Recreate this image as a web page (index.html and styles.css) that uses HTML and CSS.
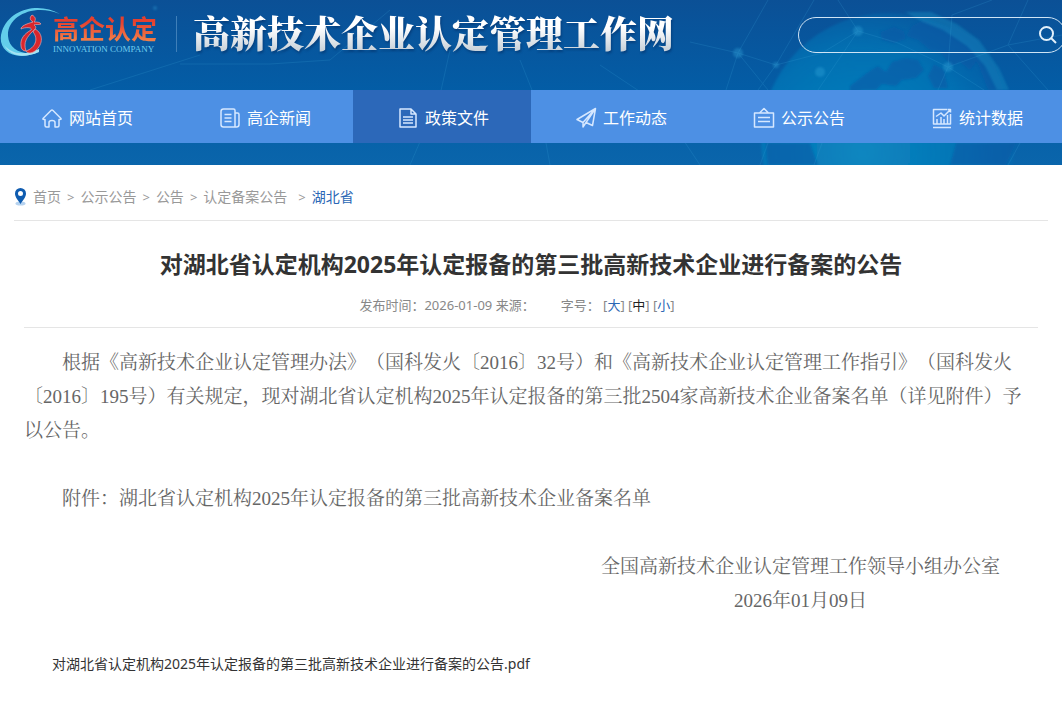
FILE: index.html
```
<!DOCTYPE html>
<html lang="zh-CN">
<head>
<meta charset="utf-8">
<title>高新技术企业认定管理工作网</title>
<link rel="stylesheet" href="styles.css">
</head>
<body>
<header class="header">
  <!-- globe and network lines -->
  <svg class="header-bg" viewBox="0 0 1062 165" preserveAspectRatio="xMaxYMin slice" aria-hidden="true">
    <defs>
      <radialGradient id="globe" cx="40%" cy="55%" r="60%">
        <stop offset="0" stop-color="#0a8dc4" stop-opacity=".85"/>
        <stop offset=".7" stop-color="#087fbd" stop-opacity=".6"/>
        <stop offset="1" stop-color="#0874b8" stop-opacity=".2"/>
      </radialGradient>
      <filter id="soft"><feGaussianBlur stdDeviation="1.2"/></filter>
    </defs>
    <circle cx="888" cy="140" r="127" fill="url(#globe)" filter="url(#soft)"/>
    <g fill="#0a58a5" opacity=".55" filter="url(#soft)">
      <path d="M880 32l14-5 10 4 2 8-12 4-12-3zM912 26l12-6 22 6 20 14 10 22-6 8-10-8-8 4-12-14-10-2-12-10-12-4z"/>
      <path d="M868 72l10-6 8 6 6-10 14-4 12 2 6 10-8 8-14 2-6 6-14-2-6 6h-14l-12 6v-10zM934 64l10 6 4 18h-14l-6-12z"/>
      <path d="M952 24l24 16 18 24 10 26h-16l-10-26-16-20-12-12z"/>
      <path d="M776 143h34q4 12 8 22h-50q-2-10-2-22zM956 143h60l-10 22h-56z"/>
    </g>
    <path d="M905 12h26l26 12 22 16 20 28 10 22h-12l-12-24-18-20-24-16-20-8z" fill="#1592c4" opacity=".4" filter="url(#soft)"/>
    <g stroke="#3aa3d8" stroke-width="1" fill="none" opacity=".2">
      <path d="M690 42l48 11 38 12 46-12 36-22 40 12 50 24 60-22 54-10M738 53l-12 37M738 53l30 37M738 53l30-53M776 65l-18 25M858 31l-20-31M858 31l-40 59M948 67l-10 23M948 67l36 23M948 67l4-52 40-15M1008 45l20-45M1008 45l40 45M814 0l-38 65"/>
      <path d="M180 64h90l60-4M450 50l-10 45-30 70M520 60l20 50 10 55M600 65l60 40 40 60M200 55L90 90M330 60l60-50M768 143l-8 22M822 143l-8 22M1020 143l-12 22"/>
    </g>
    <g fill="#35a8dc" opacity=".35" filter="url(#soft)">
      <circle cx="738" cy="53" r="5"/><circle cx="776" cy="65" r="3"/><circle cx="858" cy="31" r="5"/>
      <circle cx="820" cy="72" r="5"/><circle cx="948" cy="67" r="5"/><circle cx="155" cy="8" r="2"/>
    </g>
  </svg>

  <div class="top">
    <a class="logo" href="#" aria-label="高企认定">
      <svg class="logo-mark" width="62" height="54" viewBox="0 0 62 54" aria-hidden="true">
        <path d="M60 8C40-4 10 2 2 25c-6 18 10 32 37 21-16 4-30-2-31-16C7 10 34-3 60 8z" fill="#62cdea"/>
        <path d="M39 46c-16 7-29 4-35-7 8 9 19 11 35 4z" fill="#a4e3f4"/>
        <path d="M32 9c-3 3-2 5 1 7-7 2-12 4-12 7 4-2 12-2 10 1-7 4-11 9-10 16 0 3 2 5 5 5-3-9 1-14 7-20 4-3 3-5 1-6 2-1 4 0 7-1-1-2-4-2-7-2 2-2 2-5-2-7z" fill="#d9262c" stroke="#e9a5ab" stroke-width=".7"/>
        <path d="M35 23c8 4 9 15 0 22-4 3-8 2-9 0 9-3 13-12 7-19z" fill="#d9262c" stroke="#e9a5ab" stroke-width=".7"/>
      </svg>
      <span class="logo-text">
        <b>高企认定</b>
        <small>INNOVATION COMPANY</small>
      </span>
    </a>
    <div class="site-name">高新技术企业认定管理工作网</div>
    <form class="search">
      <input type="text" aria-label="搜索">
      <button type="button" aria-label="搜索">
        <svg width="20" height="20" viewBox="0 0 20 20"><circle cx="8.5" cy="8.5" r="6.5"/><path d="M13 13l5 5"/></svg>
      </button>
    </form>
  </div>

  <nav class="nav">
    <a href="#">
      <svg width="22" height="22" viewBox="0 0 22 22"><path d="M2 11.5L10 3.5q1-1 2 0l8 8q.5 1-1 1h-1v6q0 1.500-1.500 1.500H14v-4.500q0-2-3-2t-3 2V20H5.500Q4 20 4 18.500v-6H3q-1.500 0-1-1z"/></svg>
      网站首页</a>
    <a href="#">
      <svg width="22" height="22" viewBox="0 0 22 22"><path d="M4.500 2h10q1.500 0 1.500 1.500V20H4.500Q2 20 2 17.500v-13Q2 2 4.500 2zM16 6h2.500Q20 6 20 7.500v10q0 2.500-2.500 2.500H15M5.500 7.500h7M5.500 11h7M5.500 14.500h7"/></svg>
      高企新闻</a>
    <a class="on" href="#">
      <svg width="22" height="22" viewBox="0 0 22 22"><path d="M3 2h11l5 5v13H3zM14 2v5h5M6 10h10M6 13h10M6 16h10"/></svg>
      政策文件</a>
    <a href="#">
      <svg width="22" height="22" viewBox="0 0 22 22"><path d="M20.500 1.500L2 12.500l6 3 12.500-14-3 17-6.500-3-3 4.500v-4.500M20.500 1.500L11 15.500"/></svg>
      工作动态</a>
    <a href="#">
      <svg width="22" height="22" viewBox="0 0 22 22"><path d="M1.500 6h19v14h-19zM6.500 6L11 1.500 15.500 6M5 10.500h12M5 14.500h12"/></svg>
      公示公告</a>
    <a href="#">
      <svg width="22" height="22" viewBox="0 0 22 22"><path d="M16 2.500H2.500v14.500h17V7M2 20.500h18M6 17v-5M10 17v-7M13 17v-5M16.500 17V8M5 9.500l5-3.500 3 3 6.500-6.500M16.500 2.500h3v3"/></svg>
      统计数据</a>
  </nav>
</header>

<div class="main">
  <div class="crumb">
    <svg width="13" height="18" viewBox="0 0 13 18" aria-hidden="true">
      <ellipse cx="6.5" cy="15.5" rx="5" ry="2" fill="#b5d2ef"/>
      <path fill-rule="evenodd" d="M6.500 0A5.500 5.500 0 0 0 1 5.500c0 4 3.500 7 5.500 10.500 2-3.500 5.500-6.500 5.500-10.500A5.500 5.500 0 0 0 6.500 0zm0 3a2.500 2.500 0 1 1 0 5 2.500 2.500 0 0 1 0-5z" fill="#0f5cb0"/>
    </svg>
    <a href="#">首页</a><i>&gt;</i><a href="#">公示公告</a><i>&gt;</i><a href="#">公告</a><i>&gt;</i><a href="#">认定备案公告</a><i class="last">&gt;</i><a class="cur" href="#">湖北省</a>
  </div>

  <div class="article">
    <h1>对湖北省认定机构2025年认定报备的第三批高新技术企业进行备案的公告</h1>
    <div class="meta">
      <span>发布时间：<time>2026-01-09</time> 来源：</span>
      <span>字号： [<a href="#">大</a>] [<a class="mid" href="#">中</a>] [<a href="#">小</a>]</span>
    </div>
    <div class="content">
      <p>根据《高新技术企业认定管理办法》（国科发火〔2016〕32号）和《高新技术企业认定管理工作指引》（国科发火〔2016〕195号）有关规定，现对湖北省认定机构2025年认定报备的第三批2504家高新技术企业备案名单（详见附件）予以公告。</p>
      <p>附件：湖北省认定机构2025年认定报备的第三批高新技术企业备案名单</p>
      <div class="sign">全国高新技术企业认定管理工作领导小组办公室<br>2026年01月09日</div>
    </div>
    <a class="file" href="#">对湖北省认定机构2025年认定报备的第三批高新技术企业进行备案的公告.pdf</a>
  </div>
</div>
</body>
</html>
```
FILE: styles.css
```
* {box-sizing: border-box;}
body {margin: 0; background: #fff; color: #666; text-spacing-trim: space-all;
  font-family: "Noto Sans", "Noto Sans CJK SC", sans-serif; font-size: 14px;}
a {color: inherit; text-decoration: none;}

/* header */
.header {position: relative; overflow: hidden; padding-bottom: 22px;
  background: linear-gradient(#0b5096, #035da6 55%, #0a65ab);}
.header-bg {position: absolute; top: 0; left: 0; width: 100%; height: 100%;}
.top {position: relative; display: flex; align-items: flex-start; height: 90px;}
.logo {display: flex; margin-top: 6px;}
.logo-mark {margin-right: -9px;}
.logo-text {display: flex; flex-direction: column; padding-top: 6px;}
.logo-text b {font-size: 26px; line-height: 32px; font-weight: 700;
  font-family: "Noto Sans CJK SC", sans-serif;
  background: linear-gradient(#e5402f 30%, #f58a4c); -webkit-background-clip: text; background-clip: text; color: transparent;}
.logo-text small {font: 9px/10px "Liberation Serif", serif; color: #6fcdee;}
.logo::after {content: ""; width: 1px; height: 36px; margin: 10px 0 0 19px; background: #3f7fb9;}
.site-name {margin: 9px 0 0 16px; white-space: nowrap;
  font: 900 37px/46px "Noto Serif CJK SC", "Noto Sans CJK SC", sans-serif;
  background: linear-gradient(#fff 40%, #c9d2da 90%); -webkit-background-clip: text; background-clip: text; color: transparent;
  filter: drop-shadow(1px 2px 1px rgba(0,30,80,.4));}

.search {display: flex; width: 268px; height: 36px; margin: 17px -4px 0 auto;
  border: 1px solid #cfe4f5; border-radius: 18px;}
.search input {flex: 1; min-width: 0; padding: 0 16px; border: 0; outline: 0; background: none; color: #fff;}
.search button {width: 30px; margin-right: 2px; padding: 0; border: 0; background: none; cursor: pointer;}
.search svg {display: block; margin: auto; fill: none; stroke: #e2f0fb; stroke-width: 2;}

.nav {position: relative; display: grid; grid-template-columns: repeat(6, 1fr);
  height: 53px; margin: 0 -3px; background: #4d90e4;}
.nav a {display: flex; align-items: center; justify-content: center; gap: 6px;
  padding-left: 2px; color: #fff; font-size: 16px; white-space: nowrap;}
.nav a.on {background: #2c68b9;}
.nav svg {margin-top: 2px; fill: none; stroke: #d6e8ff; stroke-width: 1.5; stroke-linejoin: round;}

/* breadcrumb */
.main {padding: 0 14px;}
.crumb {display: flex; align-items: center; height: 56px; padding-top: 8px;
  border-bottom: 1px solid #e5e5e5; color: #999; line-height: 20px;}
.crumb svg {margin-right: 6px;}
.crumb i {margin: 0 6px; font-size: 13px; font-style: normal;}
.crumb i.last {margin-left: 11px;}
.crumb .cur {color: #2b67b5;}

/* article */
.article {padding: 23px 10px 34px;}
h1 {margin: 0; text-align: center; font-size: 23px; line-height: 40px; font-weight: 700; color: #333;}
.meta {display: flex; justify-content: center; gap: 26px; padding: 1px 28px 2px 0;
  border-bottom: 1px solid #e5e5e5; font-size: 13px; line-height: 40px; color: #888;}
.meta a {color: #2b67b5;}
.meta a.mid {color: #222;}
.content {padding-top: 18px; font-family: "Liberation Serif", "Noto Serif CJK SC", "Noto Sans CJK SC", serif;
  font-size: 19px; line-height: 34px; color: #666;}
.content p {margin: 0 0 34px; text-indent: 2em;}
.sign {width: fit-content; margin: 0 38px 0 auto; text-align: center;}
.file {display: block; margin: 36px 0 0 28px; line-height: 20px; color: #333;}
```
